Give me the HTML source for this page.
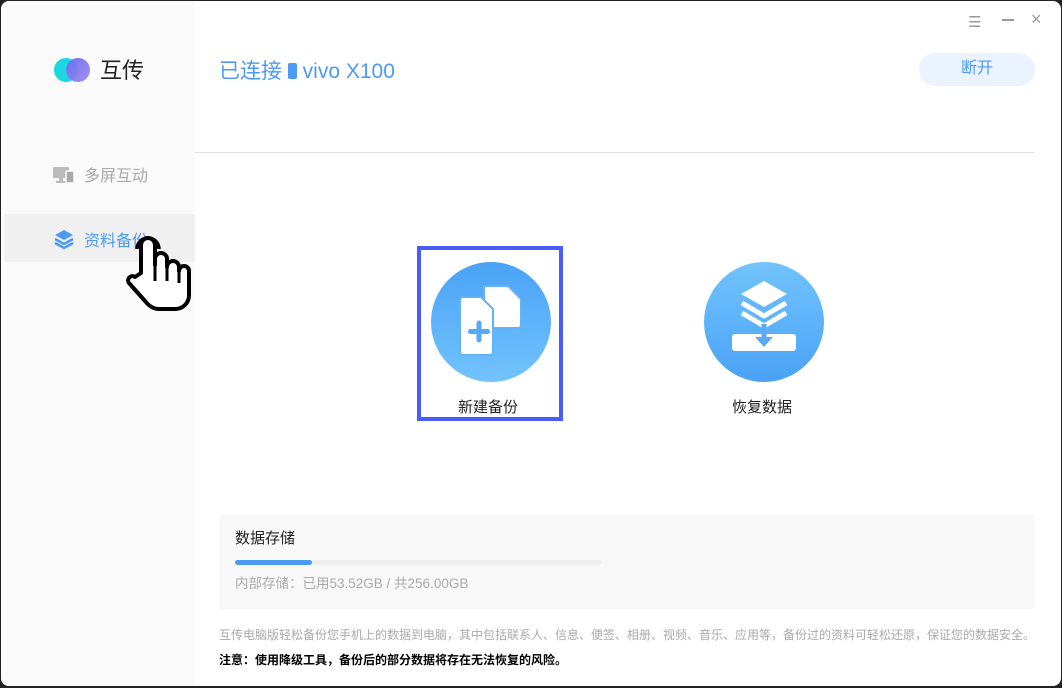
<!DOCTYPE html>
<html><head><meta charset="utf-8"><style>
*{margin:0;padding:0;box-sizing:border-box}
body{width:1062px;height:688px;background:#222;position:relative;overflow:hidden;font-family:"Liberation Sans","Noto Sans CJK SC",sans-serif}
.win{position:absolute;left:1px;top:1px;width:1060px;height:685px;background:#fff;border-radius:8px;overflow:hidden}
.side{position:absolute;left:0;top:0;width:194px;height:100%;background:#fafafa}
.abs{position:absolute}
</style></head><body>
<div class="win">
<div class="side">
 <div class="abs" style="left:53px;top:57px;width:24px;height:24px;border-radius:50%;background:#1ad7e0"></div>
 <div class="abs" style="left:65px;top:57px;width:24px;height:24px;border-radius:50%;background:linear-gradient(135deg,#6a6cf0,#a088f0);opacity:.95"></div>
 <div class="abs" style="left:99px;top:52px;font-size:22px;color:#222">互传</div>
 <svg class="abs" style="left:51px;top:164px" width="24" height="20" viewBox="0 0 24 20"><rect x="1" y="2" width="16" height="11" rx="1" fill="#bbb"/><rect x="7" y="13" width="4" height="3" fill="#bbb"/><rect x="4" y="16" width="10" height="2" fill="#bbb"/><rect x="14" y="6" width="8" height="12" rx="1" fill="#aaa" stroke="#fafafa" stroke-width="1.5"/></svg>
 <div class="abs" style="left:83px;top:161px;font-size:16px;color:#aaa">多屏互动</div>
 <div class="abs" style="left:3px;top:213px;width:191px;height:48px;background:#f0f0f0"></div>
 <svg class="abs" style="left:52px;top:227px" width="22" height="22" viewBox="0 0 22 22"><path d="M11 2 L20 7 L11 12 L2 7Z" fill="#4d9af5"/><path d="M2 11 L11 16 L20 11" stroke="#4d9af5" stroke-width="2.5" fill="none"/><path d="M2 15 L11 20 L20 15" stroke="#4d9af5" stroke-width="2.5" fill="none"/></svg>
 <div class="abs" style="left:83px;top:226px;font-size:16px;color:#4d9af5">资料备份</div>
 <svg class="abs" style="left:122px;top:230px" width="70" height="82" viewBox="0 0 70 82"><path d="M18 42 V14 a7 7 0 0 1 14 0 V34 V28 a6 6 0 0 1 12 0 V36 a6 6 0 0 1 12 0 V40 a5 5 0 0 1 10 0 V64 c0 8-6 14-14 14 H36 c-6 0-10-3-14-8 L6 52 c-3-4 2-9 6-6 Z" fill="#fff" stroke="#000" stroke-width="4" stroke-linejoin="round"/><path d="M32 34 V50 M44 36 V50 M56 40 V52" stroke="#000" stroke-width="3"/><path d="M14 18 a11 11 0 0 1 22 0" stroke="#000" stroke-width="3.5" fill="none"/></svg>
</div>
<div class="abs" style="left:218px;top:54px;font-size:21px;color:#4d9af5">已连接 <span style="display:inline-block;width:9px;height:16px;background:#4d9af5;border-radius:2px;vertical-align:-1px"></span> vivo X100</div>
<div class="abs" style="left:967px;top:12px;font-size:15px;color:#999">☰</div>
<div class="abs" style="left:1001px;top:18px;width:12px;height:1.5px;background:#999"></div>
<div class="abs" style="left:1030px;top:8px;font-size:18px;color:#999">×</div>
<div class="abs" style="left:918px;top:52px;width:116px;height:33px;border-radius:17px;background:#eaf3ff;color:#4d9af5;font-size:16px;text-align:center;line-height:31px">断开</div>
<div class="abs" style="left:194px;top:151px;width:840px;height:1px;background:#e2e2e2"></div>
<div class="abs" style="left:416px;top:245px;width:146px;height:175px;border:4px solid #4a5cff"></div>
<div class="abs" style="left:430px;top:261px;width:120px;height:120px;border-radius:50%;background:linear-gradient(#4aa2f6,#72c3fc)"></div>
<svg class="abs" style="left:430px;top:261px" width="120" height="120" viewBox="0 0 120 120"><path d="M53 24 H77 L90 37 V63 a3 3 0 0 1-3 3 H53Z" fill="#fff" stroke="#5fb3fa" stroke-width="2"/><path d="M30 35 H50 L62 47 V90 a3 3 0 0 1-3 3 H32 a3 3 0 0 1-3-3 V38Z" fill="#fff" stroke="#5fb3fa" stroke-width="2"/><path d="M48 61 V78 M39.5 69.5 H56.5" stroke="#55aaf8" stroke-width="5" stroke-linecap="round"/></svg>
<div class="abs" style="left:457px;top:395px;font-size:15px;color:#222">新建备份</div>
<div class="abs" style="left:703px;top:261px;width:120px;height:120px;border-radius:50%;background:linear-gradient(#72c3fc,#4aa2f6)"></div>
<svg class="abs" style="left:703px;top:261px" width="120" height="120" viewBox="0 0 120 120"><path d="M60 19 L83 32 L60 45 L37 32Z" fill="#fff"/><path d="M38 41 L60 54 L82 41" stroke="#fff" stroke-width="5" fill="none" stroke-linejoin="round"/><path d="M38 51 L60 64 L82 51" stroke="#fff" stroke-width="5" fill="none" stroke-linejoin="round"/><rect x="28" y="72" width="64" height="17" rx="3" fill="#fff"/><path d="M60 62 V78" stroke="#5aaaf7" stroke-width="5"/><path d="M51 75 L60 85 L69 75Z" fill="#5aaaf7"/></svg>
<div class="abs" style="left:731px;top:395px;font-size:15px;color:#222">恢复数据</div>
<div class="abs" style="left:218px;top:513px;width:816px;height:95px;background:#f8f8f8;border-radius:4px"></div>
<div class="abs" style="left:234px;top:526px;font-size:15px;color:#222">数据存储</div>
<div class="abs" style="left:234px;top:559px;width:366px;height:5px;background:#eee;border-radius:3px"></div>
<div class="abs" style="left:234px;top:559px;width:77px;height:5px;background:#4d9af5;border-radius:3px"></div>
<div class="abs" style="left:234px;top:571px;font-size:13.5px;color:#aaa">内部存储：已用53.52GB / 共256.00GB</div>
<div class="abs" style="left:218px;top:625px;font-size:12px;color:#aaa;white-space:nowrap">互传电脑版轻松备份您手机上的数据到电脑，其中包括联系人、信息、便签、相册、视频、音乐、应用等，备份过的资料可轻松还原，保证您的数据安全。</div>
<div class="abs" style="left:218px;top:650px;font-size:12px;color:#000;font-weight:bold;white-space:nowrap">注意：使用降级工具，备份后的部分数据将存在无法恢复的风险。</div>
</div>
</body></html>
